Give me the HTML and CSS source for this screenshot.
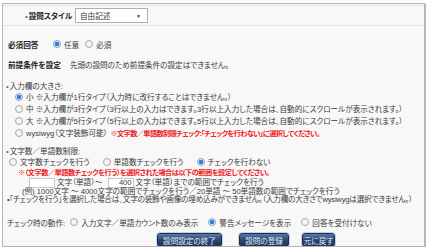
FILE: index.html
```html
<!DOCTYPE html>
<html>
  <head>
    <meta charset="utf-8">
    <title>設問設定</title>
    <link rel="stylesheet" href="styles.css">
  </head>
<body>
    <!-- 設問設定パネル -->
    <div class="panel">
        <!-- 設問スタイル -->
        <div class="style-row">
            <span class="style-label"><span class="dot">•</span>設問スタイル</span>
            <span class="select">自由記述<span class="arrow">▼</span></span>
        </div>
        <!-- 必須回答 -->
        <div class="req-row">
            <b class="req-label">必須回答</b>
            <span class="radio on"></span><span class="opt">任意</span>
            <span class="radio"></span><span class="opt">必須</span>
        </div>
        <!-- 前提条件 -->
        <div class="pre-row">
            <b class="pre-label">前提条件を設定</b>
            <span>先頭の設問のため前提条件の設定はできません。</span>
        </div>
        <!-- 入力欄の大きさ -->
        <div class="head size-head"><span class="dot">•</span>入力欄の大きさ:</div>
        <div class="size-list">
            <div class="size-item"><span class="radio on"></span>小 ※入力欄が1行タイプ（入力時に改行することはできません。）</div>
            <div class="size-item"><span class="radio"></span>中 ※入力欄が3行タイプ（3行以上の入力はできます。3行以上入力した場合は、自動的にスクロールが表示されます。）</div>
            <div class="size-item"><span class="radio"></span>大 ※入力欄が5行タイプ（5行以上の入力はできます。5行以上入力した場合は、自動的にスクロールが表示されます。）</div>
            <div class="size-item"><span class="radio"></span>wysiwyg（文字装飾可能）<span class="red wys-note">※文字数／単語数制限チェック:「チェックを行わない」に選択してください。</span></div>
        </div>
        <!-- 文字数／単語数制限 -->
        <div class="head limit-head"><span class="dot">•</span>文字数／単語数制限:</div>
        <div class="limit-radios">
            <span class="radio"></span><span class="opt limit-opt">文字数チェックを行う</span>
            <span class="radio"></span><span class="opt limit-opt">単語数チェックを行う</span>
            <span class="radio on"></span><span class="opt">チェックを行わない</span>
        </div>
        <div class="red limit-note">※（文字数／単語数チェックを行う）を選択された場合は以下の範囲を設定してください。</div>
        <div class="range-row">
            <span class="num-box"></span>
            <span class="range-mid">文字（単語）〜</span>
            <span class="num-box">400</span>
            <span>文字（単語）までの範囲でチェックを行う</span>
        </div>
        <div class="example">(例) 1000文字 〜 4000文字の範囲でチェックを行う／20単語 〜 50単語数の範囲でチェックを行う</div>
        <div class="notice">•「チェックを行う」を選択した場合は、文字の装飾や画像の埋め込みができません。（入力欄の大きさでwysiwygは選択できません。）</div>
        <!-- チェック時の動作 -->
        <div class="action-row">
            <span class="action-label">チェック時の動作:</span>
            <span class="radio"></span><span class="opt act-opt">入力文字／単語カウント数のみ表示</span>
            <span class="radio on"></span><span class="opt act-opt">警告メッセージを表示</span>
            <span class="radio"></span><span class="opt">回答を受付けない</span>
        </div>
        <!-- ボタン -->
        <div class="buttons">
            <span class="btn btn-end">設問設定の終了</span>
            <span class="btn btn-save">設問の登録</span>
            <span class="btn btn-back">元に戻す</span>
        </div>
    </div>
</body>
</html>
```

FILE: styles.css
```css
body {
    margin: 3px 0 0 2px;
    background: #fff;
    font-family: "Liberation Sans", "Noto Sans CJK JP", sans-serif;
    font-size: 7.6px;
    font-feature-settings: "palt";
    color: #3a3a3a;
    white-space: nowrap;
}
.panel {
    width: 421px;
    height: 242px;
    border: 1px solid #b4b4b4;
    background: #f8f8f8;
    box-shadow: 1px 1px 0 #b8b8b8;
    overflow: hidden;
}
.dot {
    color: #3a6fc8;
    margin-right: 1px;
}
.red {
    color: #f02020;
}
b {
    color: #222;
}

/* radio */
.radio {
    display: inline-block;
    width: 6px;
    height: 6px;
    border: 1px solid #a8a8a8;
    border-radius: 50%;
    background: #f4f4f4;
    vertical-align: -1px;
    margin-right: 3px;
    box-sizing: content-box;
}
.radio.on {
    background: radial-gradient(circle, #2f7be0 0 2px, #dfe9f6 2.5px);
    border-color: #8aa4c8;
}

/* row 1 */
.style-row {
    margin-top: 1px;
    height: 19px;
    border-top: 1px dotted #d4d4d4;
    border-bottom: 1px dotted #d4d4d4;
    display: flex;
    align-items: center;
    padding-left: 22px;
}
.style-label {
    font-weight: bold;
    color: #222;
    width: 50px;
}
.select {
    display: flex;
    align-items: center;
    width: 67px;
    height: 13px;
    padding-left: 4px;
    background: #fff;
    border: 1px solid #b0b0b0;
    color: #333;
}
.arrow {
    margin-left: auto;
    margin-right: 6px;
    font-size: 5px;
}

.req-row {
    margin-top: 12px;
    height: 12px;
    display: flex;
    align-items: center;
    padding-left: 5px;
}
.req-label {
    width: 45px;
}
.opt {
    margin-right: 6px;
}
.pre-row {
    margin-top: 8px;
    height: 12px;
    display: flex;
    align-items: center;
    padding-left: 5px;
}
.pre-label {
    width: 62px;
}

.head {
    padding-left: 3px;
    height: 11px;
    line-height: 11px;
}
.size-head {
    margin-top: 11px;
}
.size-item {
    height: 12px;
    line-height: 12px;
    padding-left: 12px;
}
.wys-note {
    margin-left: 3px;
    font-weight: bold;
    font-size: 7.2px;
    letter-spacing: -0.6px;
}

.limit-head {
    margin-top: 6px;
}
.limit-radios {
    height: 12px;
    line-height: 12px;
    padding-left: 6px;
}
.limit-opt {
    margin-right: 11px;
}
.limit-note {
    height: 8px;
    line-height: 8px;
    padding-left: 15px;
    font-weight: bold;
    font-size: 7.2px;
    letter-spacing: -0.5px;
}
.range-row {
    height: 10px;
    line-height: 8px;
    display: flex;
    align-items: center;
    padding-left: 26px;
    margin-top: 1px;
}
.num-box {
    width: 23px;
    height: 8px;
    line-height: 8px;
    background: #fff;
    border: 1px solid #c8c8c8;
    text-align: right;
    padding-right: 1px;
    margin-right: 2px;
}
.range-mid {
    margin-right: 5px;
}
.example {
    height: 8px;
    line-height: 8px;
    padding-left: 19px;
}
.notice {
    height: 8px;
    line-height: 8px;
    padding-left: 4px;
    letter-spacing: -0.2px;
}

.action-row {
    margin-top: 12px;
    height: 12px;
    display: flex;
    align-items: center;
    padding-left: 4px;
}
.action-label {
    margin-right: 5px;
}
.act-opt {
    margin-right: 10px;
}

.buttons {
    margin-top: 5px;
    display: flex;
    padding-left: 154px;
}
.btn {
    display: flex;
    align-items: center;
    justify-content: center;
    height: 12px;
    border: 1px solid #1b2f52;
    border-radius: 3px;
    background: linear-gradient(#5a78a8, #2a4673 50%, #1c355e);
    color: #e6ecf6;
    box-shadow: 0 0 0 1px #c9d2de;
}
.btn-end {
    width: 63px;
    margin-right: 17px;
}
.btn-save {
    width: 48px;
    margin-right: 13px;
}
.btn-back {
    width: 31px;
}
```
